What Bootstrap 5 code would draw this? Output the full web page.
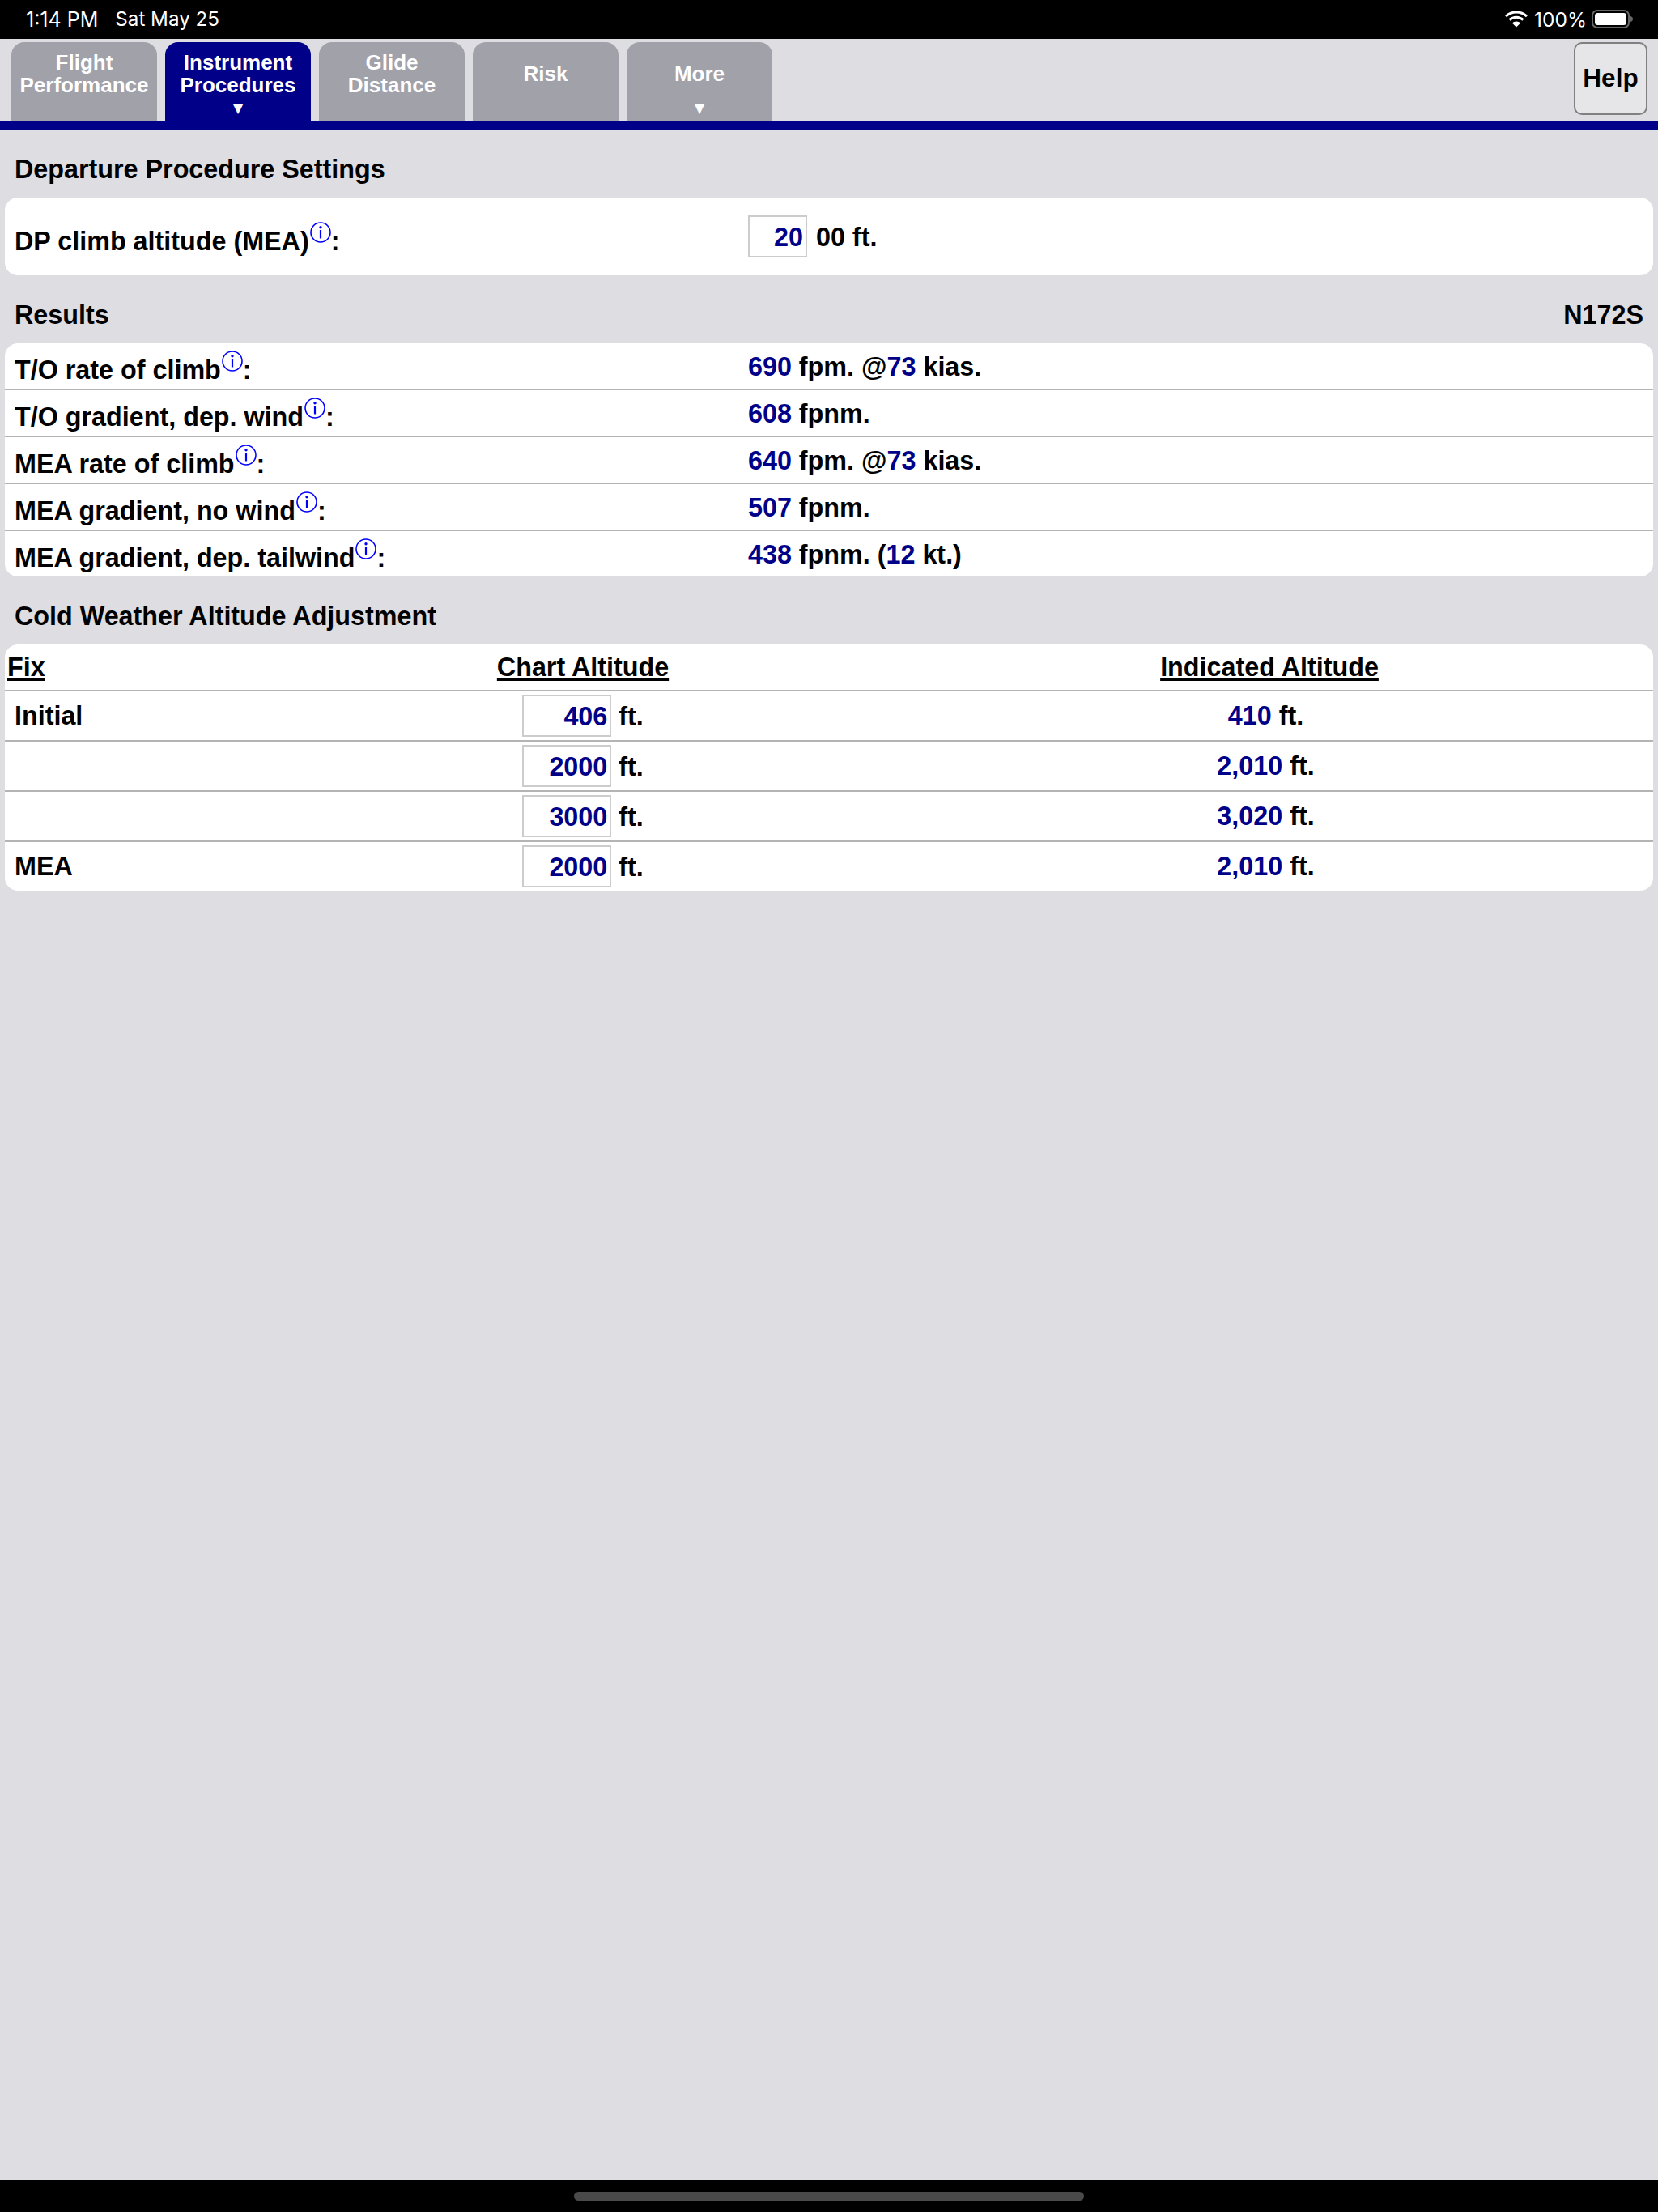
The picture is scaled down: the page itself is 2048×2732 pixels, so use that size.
<!DOCTYPE html>
<html lang="en">
<head>
<meta charset="utf-8">
<title>Instrument Procedures</title>
<link href="https://cdn.jsdelivr.net/npm/bootstrap@5.3.0/dist/css/bootstrap.min.css" rel="stylesheet">
<style>
html,body{height:100%}
body{background:#dddde2;color:#000;font-family:"Liberation Sans",Arial,sans-serif;font-size:32.3px;font-weight:700;line-height:1.15}
.status-strip{height:48px;background:#000;color:#fff;font-family:Inter,"Liberation Sans",sans-serif;font-weight:400;font-size:24.5px;padding:0 30px 0 32px}
.status-time{font-size:25px;margin-right:21px}
.status-date{font-size:24.2px}
.status-gap{gap:6px}
.tab-strip{height:112px;padding:4px 13px 0 14px;border-bottom:10px solid #000088;gap:10px}
.tab-item{width:180px;height:98px;background:#a1a1aa;color:#fff;border-radius:16px 16px 0 0;padding-top:11px;font-size:26px;line-height:28px}
.tab-item.on{background:#000088}
.tab-text{height:56px}
.tab-arrow{font-size:17px;line-height:28px;font-family:"DejaVu Sans",sans-serif}
.help-btn{width:91px;height:90px;margin-left:auto;background:#e6e6e8;border:2px solid #808080;border-radius:10px;color:#000;font-size:31.5px;font-weight:700;padding:0}
.sect-head{height:84px;padding:15px 18px 0}
.sheet{margin:0 6px;background:#fff;border-radius:16px}
.line{border-top:2px solid #b4b4b4}
.res-row{height:56px}
.res-row.line{height:58px}
.dp-row{height:96px}
.lbl{width:918px;padding-left:12px;flex:none;white-space:nowrap}
.lbl-r{padding-top:6px}
.lbl-d{padding-top:8px}
.val-t{padding-top:4px}
.num{color:#000088}
.info{width:26px;height:26px;vertical-align:9px;margin-left:1px}
.val-box{display:inline-block;background:#fff;border:2px solid #ccc;text-align:right;padding-right:3px;color:#000088;height:52px;line-height:50px}
.box-a{width:73px;margin-right:2px}
.box-b{width:110px}
.tbl-head,.tbl-row{display:grid;grid-template-columns:340px 748px 948px}
.tbl-head{height:56px;align-items:center;padding-top:2px}
.tbl-row{height:62px;align-items:center}
.cell-t{padding-top:2px}
.u-line{text-decoration:underline;text-decoration-thickness:3px;text-underline-offset:3px}
.fix-h{padding-left:3px}
.fix-c{padding-left:12px;padding-top:2px}
.foot-strip{height:40px;background:#000}
.home-pill{width:630px;height:11px;background:#4a4a4a;border-radius:6px}
</style>
</head>
<body class="d-flex flex-column">

<svg width="0" height="0" class="position-absolute">
  <symbol id="ico-info" viewBox="0 0 26 26">
    <circle cx="13" cy="13" r="12" fill="none" stroke="#0000ff" stroke-width="1.6"/>
    <circle cx="13" cy="6.8" r="1.7" fill="#0000ff"/>
    <rect x="11.9" y="10" width="2.2" height="10.5" fill="#0000ff"/>
  </symbol>
</svg>

<div class="status-strip d-flex align-items-center justify-content-between">
  <div class="d-flex align-items-center"><span class="status-time">1:14 PM</span><span class="status-date">Sat May 25</span></div>
  <div class="d-flex align-items-center gap-2">
    <svg width="28" height="21" viewBox="0 0 28 21"><path d="M1 7.2C8.500 .4 19.500 .4 27 7.200" fill="none" stroke="#fff" stroke-width="3"/><path d="M5.600 11.500C10.500 7.200 17.500 7.200 22.400 11.500" fill="none" stroke="#fff" stroke-width="3"/><path d="M14 20.500L8.800 15.400C11.600 12.700 16.400 12.700 19.200 15.400Z" fill="#fff"/></svg>
    <div class="status-gap d-flex align-items-center">
      <span>100%</span>
      <svg width="52" height="23" viewBox="0 0 52 23"><rect x="1" y="1" width="45" height="21" rx="6" fill="none" stroke="#666" stroke-width="2"/><rect x="4" y="4" width="39" height="15" rx="3.500" fill="#fff"/><path d="M48 8c2 .5 3 1.800 3 3.500S50 14.500 48 15Z" fill="#666"/></svg>
    </div>
  </div>
</div>

<div class="tab-strip d-flex align-items-start">
  <div class="tab-item text-center"><div class="tab-text d-flex align-items-center justify-content-center">Flight<br>Performance</div></div>
  <div class="tab-item on text-center"><div class="tab-text d-flex align-items-center justify-content-center">Instrument<br>Procedures</div><div class="tab-arrow">▼</div></div>
  <div class="tab-item text-center"><div class="tab-text d-flex align-items-center justify-content-center">Glide<br>Distance</div></div>
  <div class="tab-item text-center"><div class="tab-text d-flex align-items-center justify-content-center">Risk</div></div>
  <div class="tab-item text-center"><div class="tab-text d-flex align-items-center justify-content-center">More</div><div class="tab-arrow">▼</div></div>
  <button type="button" class="btn help-btn">Help</button>
</div>

<main class="flex-grow-1">
  <div class="sect-head d-flex align-items-center">Departure Procedure Settings</div>
  <div class="sheet">
    <div class="dp-row d-flex align-items-center">
      <div class="lbl lbl-d">DP climb altitude (MEA)<svg class="info"><use href="#ico-info"/></svg>:</div>
      <div><span class="val-box box-a">20</span> 00 ft.</div>
    </div>
  </div>

  <div class="sect-head d-flex align-items-center justify-content-between"><span>Results</span><span>N172S</span></div>
  <div class="sheet">
    <div class="res-row d-flex align-items-center">
      <div class="lbl lbl-r">T/O rate of climb<svg class="info"><use href="#ico-info"/></svg>:</div>
      <div class="val-t"><span class="num">690</span> fpm. @<span class="num">73</span> kias.</div>
    </div>
    <div class="res-row line d-flex align-items-center">
      <div class="lbl lbl-r">T/O gradient, dep. wind<svg class="info"><use href="#ico-info"/></svg>:</div>
      <div class="val-t"><span class="num">608</span> fpnm.</div>
    </div>
    <div class="res-row line d-flex align-items-center">
      <div class="lbl lbl-r">MEA rate of climb<svg class="info"><use href="#ico-info"/></svg>:</div>
      <div class="val-t"><span class="num">640</span> fpm. @<span class="num">73</span> kias.</div>
    </div>
    <div class="res-row line d-flex align-items-center">
      <div class="lbl lbl-r">MEA gradient, no wind<svg class="info"><use href="#ico-info"/></svg>:</div>
      <div class="val-t"><span class="num">507</span> fpnm.</div>
    </div>
    <div class="res-row line d-flex align-items-center">
      <div class="lbl lbl-r">MEA gradient, dep. tailwind<svg class="info"><use href="#ico-info"/></svg>:</div>
      <div class="val-t"><span class="num">438</span> fpnm. (<span class="num">12</span> kt.)</div>
    </div>
  </div>

  <div class="sect-head d-flex align-items-center">Cold Weather Altitude Adjustment</div>
  <div class="sheet">
    <div class="tbl-head">
      <div class="fix-h"><span class="u-line">Fix</span></div>
      <div class="text-center"><span class="u-line">Chart Altitude</span></div>
      <div class="text-center"><span class="u-line">Indicated Altitude</span></div>
    </div>
    <div class="tbl-row line">
      <div class="fix-c">Initial</div>
      <div class="text-center"><span class="val-box box-b">406</span> ft.</div>
      <div class="text-center cell-t"><span class="num">410</span> ft.&nbsp;</div>
    </div>
    <div class="tbl-row line">
      <div class="fix-c"></div>
      <div class="text-center"><span class="val-box box-b">2000</span> ft.</div>
      <div class="text-center cell-t"><span class="num">2,010</span> ft.&nbsp;</div>
    </div>
    <div class="tbl-row line">
      <div class="fix-c"></div>
      <div class="text-center"><span class="val-box box-b">3000</span> ft.</div>
      <div class="text-center cell-t"><span class="num">3,020</span> ft.&nbsp;</div>
    </div>
    <div class="tbl-row line">
      <div class="fix-c">MEA</div>
      <div class="text-center"><span class="val-box box-b">2000</span> ft.</div>
      <div class="text-center cell-t"><span class="num">2,010</span> ft.&nbsp;</div>
    </div>
  </div>
</main>

<div class="foot-strip d-flex align-items-center justify-content-center"><div class="home-pill"></div></div>

<script src="https://cdn.jsdelivr.net/npm/bootstrap@5.3.0/dist/js/bootstrap.bundle.min.js"></script>
</body>
</html>
